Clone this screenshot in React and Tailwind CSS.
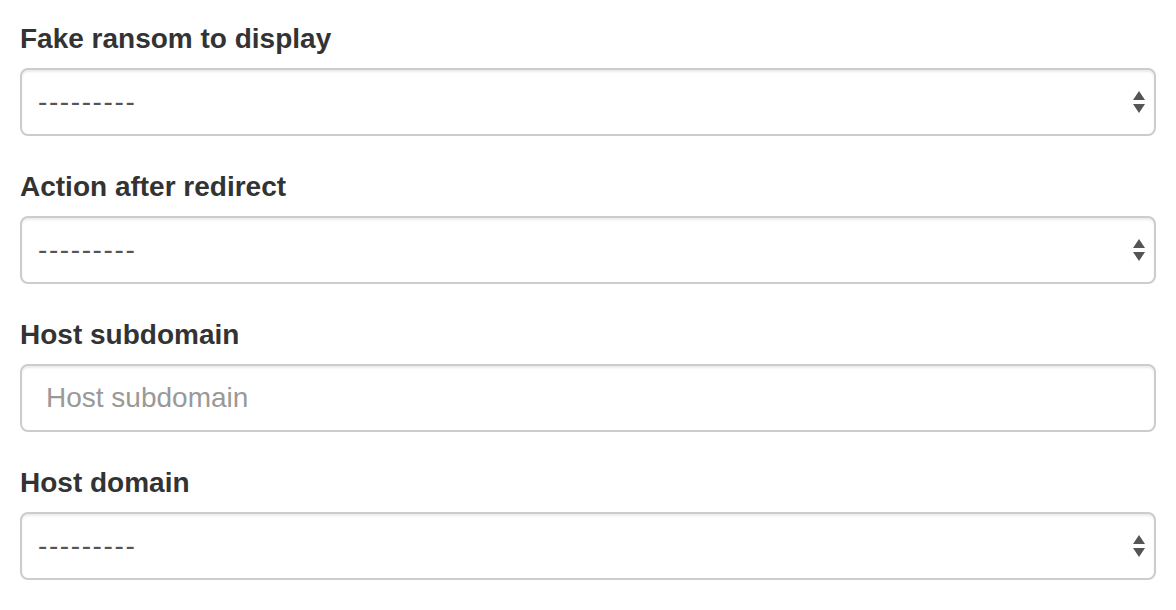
import React from "react";

const fields = [
  { label: "Fake ransom to display", type: "select" },
  { label: "Action after redirect", type: "select" },
  { label: "Host subdomain", type: "text" },
  { label: "Host domain", type: "select" },
];

const SelectArrows = () => (
  <svg
    className="absolute right-[11px] top-1/2 -translate-y-1/2 pointer-events-none"
    width="12"
    height="22"
    viewBox="0 0 12 22"
  >
    <path d="M6 0 L12 9 L0 9 Z" fill="#555" />
    <path d="M0 13 L12 13 L6 22 Z" fill="#555" />
  </svg>
);

const Field = ({ label, type }) => (
  <div className="mb-[30px]">
    <label className="block mb-[8px] text-[28px] leading-[42px] font-bold text-[#333]">
      {label}
    </label>
    {type === "select" ? (
      <div className="relative">
        <select
          defaultValue=""
          className="block w-full h-[68px] appearance-none bg-white border-2 border-[#ccc] rounded-[8px] pl-[16px] pr-[40px] text-[28px] tracking-[1.6px] text-[#555] shadow-[inset_0_2px_2px_rgba(0,0,0,0.075)] outline-none"
        >
          <option value="">---------</option>
        </select>
        <SelectArrows />
      </div>
    ) : (
      <input
        type="text"
        placeholder={label}
        className="block w-full h-[68px] bg-white border-2 border-[#ccc] rounded-[8px] px-[24px] text-[28px] text-[#555] placeholder:text-[#999] shadow-[inset_0_2px_2px_rgba(0,0,0,0.075)] outline-none"
      />
    )}
  </div>
);

export default function App() {
  return (
    <div
      className="bg-white min-h-[610px] pt-[18px] px-[20px] w-[1176px]"
      style={{ fontFamily: '"Liberation Sans", Arial, sans-serif' }}
    >
      {fields.map((f) => (
        <Field key={f.label} {...f} />
      ))}
    </div>
  );
}
